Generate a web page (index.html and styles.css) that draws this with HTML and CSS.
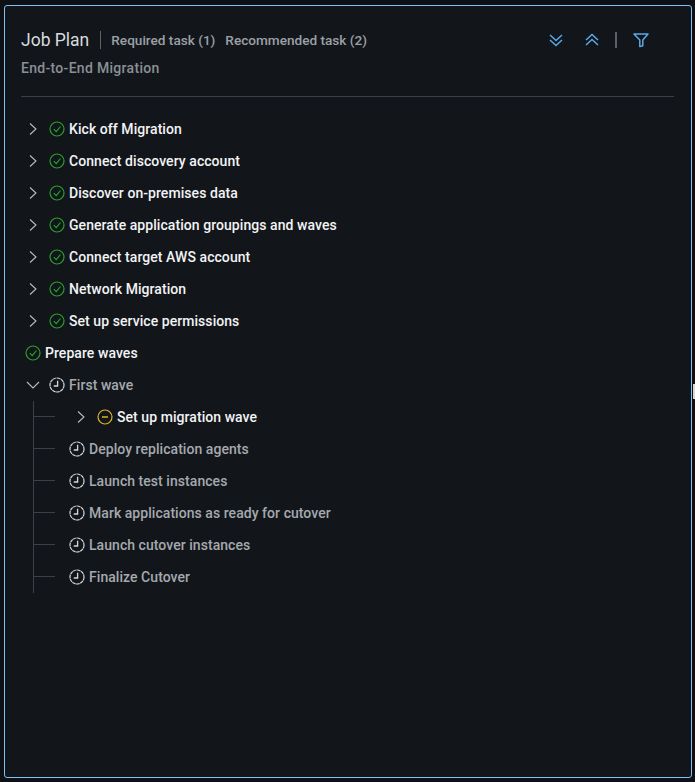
FILE: index.html
```html
<!DOCTYPE html>
<html lang="en">
<head>
<meta charset="utf-8">
<title>Job Plan</title>
<link rel="stylesheet" href="styles.css">
</head>
<body>
<svg class="defs" width="0" height="0" aria-hidden="true">
  <defs>
    <symbol id="done" viewBox="0 0 16 16">
      <circle cx="8" cy="8" r="7" fill="none" stroke="#2a9e2a" stroke-width="1.2"/>
      <path d="M4.8 8.2 7.2 10.6 11.4 5.6" fill="none" stroke="#2a9e2a" stroke-width="1.1"/>
    </symbol>
    <symbol id="clock" viewBox="0 0 16 16">
      <circle cx="8" cy="8" r="7" fill="none" stroke="#d5d8dc" stroke-width="1.2" stroke-dasharray="3.6 .5"/>
      <path d="M8.6 3.8V9H4.8" fill="none" stroke="#d5d8dc" stroke-width="1.3"/>
    </symbol>
    <symbol id="pending" viewBox="0 0 16 16">
      <circle cx="8" cy="8" r="7" fill="none" stroke="#dcb52c" stroke-width="1.2"/>
      <path d="M5 8H11" fill="none" stroke="#dcb52c" stroke-width="1.5"/>
    </symbol>
    <symbol id="right" viewBox="0 0 16 16">
      <path d="M5 2.500 11 8 5 13.500" fill="none" stroke="#b9bdc2" stroke-width="1.1"/>
    </symbol>
    <symbol id="down" viewBox="0 0 16 16">
      <path d="M2 5 8 11 14 5" fill="none" stroke="#b9bdc2" stroke-width="1.1"/>
    </symbol>
  </defs>
</svg>
<main class="panel">
  <header class="head">
    <div class="head-text">
      <div class="title-line">
        <h1 class="title">Job Plan</h1>
        <span class="tasks">Required task (1)</span>
        <span class="tasks">Recommended task (2)</span>
      </div>
      <p class="subtitle">End-to-End Migration</p>
    </div>
    <div class="tools">
      <svg class="tool" viewBox="0 0 16 16"><path d="M2 3 8 8.5 14 3M2 8 8 13.5 14 8" fill="none" stroke="#5aa9e6" stroke-width="1.5"/></svg>
      <svg class="tool" viewBox="0 0 16 16"><path d="M2 8 8 2.500 14 8M2 13 8 7.500 14 13" fill="none" stroke="#5aa9e6" stroke-width="1.5"/></svg>
      <span class="tool-sep"></span>
      <svg class="tool" viewBox="0 0 16 16"><path d="M1 2H15L9.800 8V13.800L6.800 14.600V8Z" fill="none" stroke="#5aa9e6" stroke-width="1.500" stroke-linejoin="round"/></svg>
    </div>
  </header>
  <ul class="tree">
    <li class="row"><svg class="chev"><use href="#right"/></svg><svg class="status"><use href="#done"/></svg><span class="strong">Kick off Migration</span></li>
    <li class="row"><svg class="chev"><use href="#right"/></svg><svg class="status"><use href="#done"/></svg><span class="strong">Connect discovery account</span></li>
    <li class="row"><svg class="chev"><use href="#right"/></svg><svg class="status"><use href="#done"/></svg><span class="strong">Discover on-premises data</span></li>
    <li class="row"><svg class="chev"><use href="#right"/></svg><svg class="status"><use href="#done"/></svg><span class="strong">Generate application groupings and waves</span></li>
    <li class="row"><svg class="chev"><use href="#right"/></svg><svg class="status"><use href="#done"/></svg><span class="strong">Connect target AWS account</span></li>
    <li class="row"><svg class="chev"><use href="#right"/></svg><svg class="status"><use href="#done"/></svg><span class="strong">Network Migration</span></li>
    <li class="row"><svg class="chev"><use href="#right"/></svg><svg class="status"><use href="#done"/></svg><span class="strong">Set up service permissions</span></li>
    <li class="row"><svg class="status"><use href="#done"/></svg><span class="strong">Prepare waves</span></li>
    <li class="row"><svg class="chev"><use href="#down"/></svg><svg class="status"><use href="#clock"/></svg><span class="muted">First wave</span></li>
    <li>
      <ul class="children">
        <li class="row child nested"><svg class="chev"><use href="#right"/></svg><svg class="status"><use href="#pending"/></svg><span class="strong">Set up migration wave</span></li>
        <li class="row child"><svg class="status"><use href="#clock"/></svg><span class="muted">Deploy replication agents</span></li>
        <li class="row child"><svg class="status"><use href="#clock"/></svg><span class="muted">Launch test instances</span></li>
        <li class="row child"><svg class="status"><use href="#clock"/></svg><span class="muted">Mark applications as ready for cutover</span></li>
        <li class="row child"><svg class="status"><use href="#clock"/></svg><span class="muted">Launch cutover instances</span></li>
        <li class="row child"><svg class="status"><use href="#clock"/></svg><span class="muted">Finalize Cutover</span></li>
      </ul>
    </li>
  </ul>
</main>
<span class="edge-mark"></span>
</body>
</html>
```
FILE: styles.css
```css
* { box-sizing: border-box; }
html, body { margin: 0; height: 100%; }
body {
  padding: 5px 3px 4px 4px;
  background: #0e1015;
  font-family: Roboto, "Noto Sans", sans-serif;
  font-size: 14px;
  overflow: hidden;
}
.defs { position: absolute; }
.panel {
  height: 100%;
  padding: 0 17px 0 16px;
  background: #12161b;
  border: 1px solid #7fc1f2;
  border-radius: 3px;
}
.head {
  display: flex;
  justify-content: space-between;
  height: 91px;
  border-bottom: 1px solid #3b3f47;
}
.title-line { display: flex; align-items: center; height: 24px; margin-top: 22px; }
.title {
  margin: 0 10px 0 0;
  padding-right: 11px;
  font-size: 17.500px;
  font-weight: 400;
  line-height: 18px;
  color: #d8dbde;
  border-right: 1px solid #5f6369;
}
.tasks { margin-right: 10px; color: #9ba0a6; font-weight: 500; font-size: 13.600px; }
.subtitle { margin: 6px 0 0; color: #8b9096; font-weight: 500; font-size: 14px; letter-spacing: .3px; line-height: 20px; }
.tools { display: flex; align-items: center; height: 24px; margin: 22px 25px 0 0; }
.tool { width: 16px; height: 16px; margin-left: 20px; }
.tool-sep { width: 2px; height: 16px; margin-left: 15px; margin-right: -4px; background: #5b6068; }
.tree, .children { list-style: none; margin: 0; padding: 0; }
.tree { padding-top: 16px; }
.row { display: flex; align-items: center; height: 32px; padding-left: 4px; }
.chev { width: 16px; height: 16px; margin-right: 8px; }
.status { flex: none; width: 16px; height: 16px; margin-right: 4px; }
.strong { color: #f2f3f4; font-weight: 500; letter-spacing: .06px; }
.muted { color: #a5a9ae; font-weight: 500; letter-spacing: .05px; }
.children { position: relative; margin-left: 12px; border-left: 1px solid #3d4147; width: 400px; height: 192px; }
.child { position: relative; padding-left: 35px; }
.nested { padding-left: 39px; }
.child::before {
  content: "";
  position: absolute;
  left: 0;
  top: 15px;
  width: 21px;
  border-top: 1px solid #3d4147;
}
.edge-mark { position: absolute; right: 0; top: 384px; width: 2px; height: 15px; background: #d7dadd; }
```
